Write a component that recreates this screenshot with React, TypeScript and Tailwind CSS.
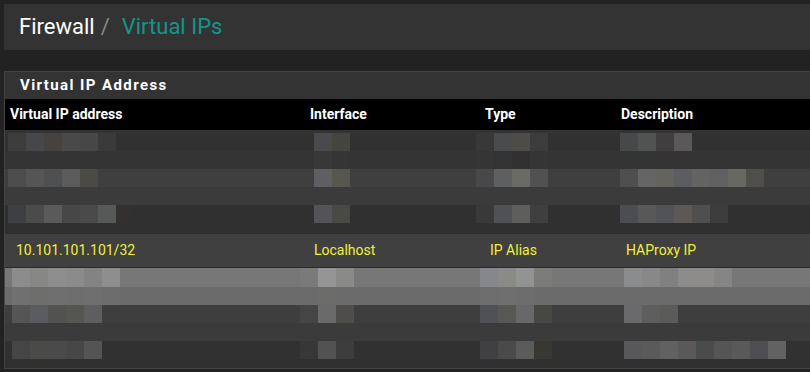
import React from "react";

type Stripe = { h: number; bg: string; cells: [number, string][] };

const region1: Stripe[] = [
  { h: 3, bg: "#333333", cells: [] },
  {
    h: 18,
    bg: "#313131",
    cells: [
      [8, "#3c3c3c"], [26, "#45474a"], [44, "#45423f"], [62, "#494949"], [80, "#474747"], [98, "#3a3a3a"],
      [314, "#4a4a4e"], [332, "#45453f"],
      [476, "#383838"], [494, "#4a4b4d"], [512, "#4d4c49"], [530, "#3c3c3c"],
      [620, "#47484a"], [638, "#515252"], [656, "#403e3f"], [674, "#5a5858"],
    ],
  },
  { h: 18, bg: "#343434", cells: [[314, "#383838"], [332, "#353535"], [476, "#353535"], [494, "#333333"], [512, "#313131"], [530, "#353535"]] },
  {
    h: 18,
    bg: "#3f3f3f",
    cells: [
      [8, "#4d4d4d"], [26, "#555555"], [44, "#4f5052"], [62, "#5c5c5c"], [80, "#4b4a47"],
      [314, "#5f5f63"], [332, "#57574f"],
      [476, "#48484a"], [494, "#5e5f61"], [512, "#6a6a66"], [530, "#515151"],
      [620, "#4f4f4f"], [638, "#646564"], [656, "#64635e"], [674, "#5c5d60"], [692, "#636363"], [710, "#5f6062"], [728, "#686863"], [746, "#504e4b"],
    ],
  },
  { h: 18, bg: "#3b3b3b", cells: [] },
  {
    h: 18,
    bg: "#303030",
    cells: [
      [8, "#3d3f42"], [26, "#4b4b4b"], [44, "#5a5a5a"], [62, "#474747"], [80, "#4a4a4a"], [98, "#575958"], [116, "#333130"],
      [314, "#535358"], [332, "#4a4a44"],
      [476, "#393939"], [494, "#505154"], [512, "#5e5e5a"], [530, "#3f3f3f"],
      [620, "#4c4d50"], [638, "#575857"], [656, "#525357"], [674, "#5b5855"], [692, "#4f4f4f"], [710, "#3d3d3d"],
    ],
  },
  { h: 11, bg: "#303030", cells: [] },
];

const region2: Stripe[] = [
  {
    h: 19,
    bg: "#777777",
    cells: [
      [12, "#8c8c8c"], [30, "#878785"], [48, "#8d8d8d"], [66, "#8b8b8b"], [84, "#838383"], [102, "#8e8e8e"],
      [300, "#7a7a7a"], [318, "#959595"], [336, "#8a8a88"],
      [480, "#86878a"], [498, "#8a8a87"], [516, "#929393"], [534, "#7c7c7a"],
      [624, "#8b8c8e"], [642, "#888888"], [660, "#808080"], [678, "#8c8c8c"], [696, "#8d8c8a"], [714, "#858585"],
    ],
  },
  {
    h: 18,
    bg: "#6b6b6b",
    cells: [
      [12, "#707070"], [30, "#6e6e6c"], [48, "#6f6f6f"], [66, "#6e6e6e"], [84, "#6f6f6f"], [102, "#6d6d6d"],
      [318, "#6c6c6a"], [480, "#6e6e6e"], [498, "#6f6f6f"], [516, "#6d6d6d"],
    ],
  },
  {
    h: 18,
    bg: "#3e3e3e",
    cells: [
      [12, "#555555"], [30, "#5a5c5f"], [48, "#525250"], [66, "#555552"], [84, "#5e5e5e"],
      [300, "#454545"], [318, "#6a6a6a"], [336, "#4e4d4a"],
      [480, "#505154"], [498, "#575753"], [516, "#676867"], [534, "#474744"],
      [624, "#6a6a6c"], [642, "#5e5e5e"], [660, "#5b5b5a"],
    ],
  },
  { h: 18, bg: "#3b3b3b", cells: [] },
  {
    h: 18,
    bg: "#313131",
    cells: [
      [12, "#454545"], [30, "#4a4a48"], [48, "#4a4a4a"], [66, "#474747"], [84, "#545454"],
      [300, "#373737"], [318, "#525252"], [336, "#3d3d3d"],
      [480, "#404043"], [498, "#4a4a4a"], [516, "#5a5c5b"], [534, "#383734"],
      [624, "#58585a"], [642, "#5a5a5a"], [660, "#616063"], [678, "#5a5858"], [696, "#4a4b4d"], [714, "#555556"], [732, "#59595a"], [750, "#4e4d52"], [768, "#626262"],
    ],
  },
  { h: 9, bg: "#303030", cells: [] },
];

function segments(s: Stripe) {
  const out: { w: number; c: string }[] = [];
  let cur = 5;
  const cells = [...s.cells].sort((a, b) => a[0] - b[0]);
  for (const [x, c] of cells) {
    if (x > cur) out.push({ w: x - cur, c: s.bg });
    out.push({ w: 18, c });
    cur = x + 18;
  }
  if (cur < 810) out.push({ w: 810 - cur, c: s.bg });
  return out;
}

function Blurred({ stripes }: { stripes: Stripe[] }) {
  return (
    <div className="flex flex-col">
      {stripes.map((s, i) => (
        <div key={i} className="flex shrink-0" style={{ height: s.h }}>
          {segments(s).map((seg, j) => (
            <div key={j} className="shrink-0 h-full" style={{ width: seg.w, background: seg.c }} />
          ))}
        </div>
      ))}
    </div>
  );
}

export default function App() {
  return (
    <div
      className="w-[810px] h-[372px] overflow-hidden bg-[#222222] pt-[4px] pl-[4px]"
      style={{ fontFamily: "Roboto, 'Liberation Sans', sans-serif" }}
    >
      <div className="h-[46px] bg-[#333333] flex items-center pl-[15px] text-[22px] leading-none">
        <span className="text-white">Firewall</span>
        <span className="text-[#8a8a8a] ml-[6px]">/</span>
        <span className="text-[#13958a] ml-[12px]">Virtual IPs</span>
      </div>
      <div className="mt-[21px] border-t border-l border-b border-[#444444] bg-[#333333]">
        <div className="h-[27px] flex items-center pl-[15px] text-white font-bold text-[15px] tracking-[1.4px]">
          Virtual IP Address
        </div>
        <div className="h-[31px] bg-black grid grid-cols-[300px_175px_136px_1fr] items-center pl-[5px] text-white font-bold text-[14px]">
          <div>Virtual IP address</div>
          <div>Interface</div>
          <div>Type</div>
          <div>Description</div>
        </div>
        <Blurred stripes={region1} />
        <div className="h-[34px] bg-[#404040] border-b border-[#2a2a2a] grid grid-cols-[300px_175px_136px_1fr] items-center pl-[5px] text-[14px] text-[#f0f03a]">
          <div className="pl-[6px]">10.101.101.101/32</div>
          <div className="pl-[4px]">Localhost</div>
          <div className="pl-[5px]">IP Alias</div>
          <div className="pl-[5px]">HAProxy IP</div>
        </div>
        <Blurred stripes={region2} />
      </div>
    </div>
  );
}
